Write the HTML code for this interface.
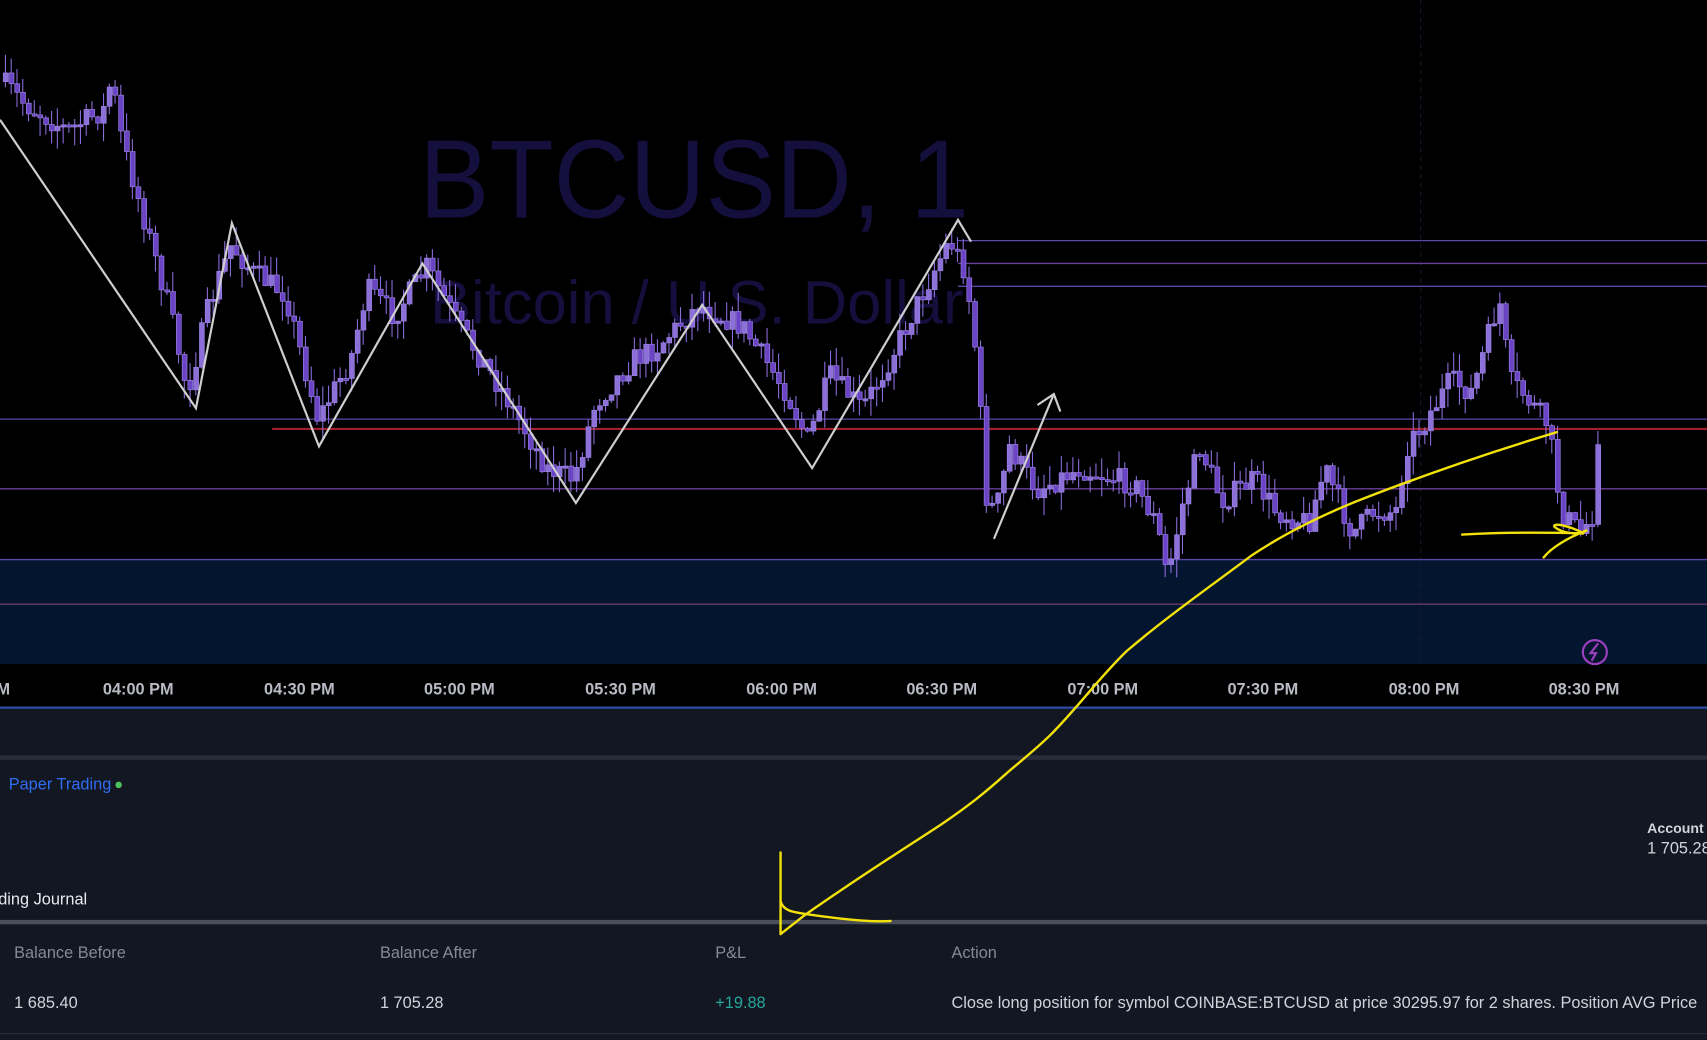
<!DOCTYPE html>
<html><head><meta charset="utf-8"><style>
html,body{margin:0;padding:0;background:#131722;overflow:hidden;width:1707px;height:1040px}
#w{position:absolute;left:0;top:0;width:1568px;height:955px;transform:scale(1.08865);transform-origin:0 0;background:#131722;font-family:"Liberation Sans","DejaVu Sans",sans-serif}
.t{position:absolute;white-space:nowrap}
</style></head><body><div id="w">
<svg id="s" width="1568" height="955" viewBox="0 0 1568 955" style="position:absolute;left:0;top:0">
<rect x="0" y="0" width="1568" height="650" fill="#000"/>
<rect x="0" y="514" width="1568" height="96" fill="#041530"/>
<text x="385" y="200" font-size="102" fill="#150f3d" textLength="505" lengthAdjust="spacingAndGlyphs">BTCUSD, 1</text>
<text x="395" y="297" font-size="56" fill="#150f3d" textLength="490" lengthAdjust="spacingAndGlyphs">Bitcoin / U.S. Dollar</text>
<line x1="1305" y1="0" x2="1305" y2="610" stroke="#161d30" stroke-dasharray="4 4"/>
<g stroke-width="1.2">
<line x1="880" y1="221" x2="1568" y2="221" stroke="#5b47a8"/>
<line x1="880" y1="242" x2="1568" y2="242" stroke="#6a3f9c"/>
<line x1="880" y1="263" x2="1568" y2="263" stroke="#5b47a8"/>
<line x1="0" y1="385" x2="1568" y2="385" stroke="#5b47a8"/>
<line x1="0" y1="449" x2="1568" y2="449" stroke="#6a3f9c"/>
<line x1="0" y1="514" x2="1568" y2="514" stroke="#5b47a8"/>
<line x1="0" y1="555" x2="1568" y2="555" stroke="#6a3a6a"/>
</g>
<line x1="250" y1="394" x2="1568" y2="394" stroke="#a02030" stroke-width="2"/>
<g id="c"></g>
<polyline points="0,110 180,375 213,205 293,410 388,242 529,462 645,280 746,430 880,202 892,222" fill="none" stroke="#cfcfcf" stroke-width="2"/>
<polyline points="913,495 968,362" fill="none" stroke="#cfcfcf" stroke-width="2"/>
<polyline points="953,372 968,362 974,378" fill="none" stroke="#cfcfcf" stroke-width="2"/>
<rect x="0" y="610" width="1568" height="40" fill="#000"/>
<g font-size="15" font-weight="bold" fill="#b8bbc4" text-anchor="middle">
<text x="3" y="638">M</text><text x="127" y="638">04:00 PM</text><text x="275" y="638">04:30 PM</text><text x="422" y="638">05:00 PM</text><text x="570" y="638">05:30 PM</text><text x="718" y="638">06:00 PM</text><text x="865" y="638">06:30 PM</text><text x="1013" y="638">07:00 PM</text><text x="1160" y="638">07:30 PM</text><text x="1308" y="638">08:00 PM</text><text x="1455" y="638">08:30 PM</text>
</g>
<circle cx="1465" cy="599" r="11" fill="none" stroke="#9c40c0" stroke-width="2"/>
<path d="M1468,591 L1461,600 L1466,600 L1462,607" fill="none" stroke="#9c40c0" stroke-width="2"/>
<rect x="0" y="649" width="1568" height="2" fill="#2f4ea8"/>
<rect x="0" y="694" width="1568" height="4" fill="#2a2e39"/>
<rect x="0" y="845" width="1568" height="4" fill="#4a4e58"/>
<rect x="0" y="949" width="1568" height="1" fill="#2a2e39"/>
<g fill="none" stroke="#f2e20a" stroke-width="2.2" stroke-linecap="round">
<path d="M717,858 L740,840 C790,805 830,780 865,757 C890,740 905,728 925,710 C945,693 955,685 965,675 C990,650 1010,622 1035,598 C1070,568 1110,540 1150,510 C1180,490 1220,470 1260,455 C1320,432 1380,412 1430,397"/>
<path d="M717,783 L717,858"/>
<path d="M717,828 C720,838 730,838 750,841 C780,845 800,847 818,846"/>
<path d="M1343,491 C1380,489 1420,489 1455,490 C1440,482 1425,480 1428,484 C1435,490 1450,492 1458,487 C1440,494 1425,503 1418,512"/>
</g>
</svg>
<div class="t" style="left:8px;top:712px;font-size:15px;color:#2f6cf0">Paper Trading <span style="display:inline-block;width:6px;height:6px;border-radius:3px;background:#4cc05a;vertical-align:middle"></span></div>
<div class="t" style="left:1513px;top:753px;font-size:13px;font-weight:bold;color:#d1d4dc">Account</div>
<div class="t" style="left:1513px;top:771px;font-size:15px;color:#d1d4dc">1 705.28</div>
<div class="t" style="left:-10px;top:818px;font-size:15px;color:#e6e8ee">ading Journal</div>
<div class="t" style="left:13px;top:867px;font-size:15px;color:#868993">Balance Before</div>
<div class="t" style="left:349px;top:867px;font-size:15px;color:#868993">Balance After</div>
<div class="t" style="left:657px;top:867px;font-size:15px;color:#868993">P&amp;L</div>
<div class="t" style="left:874px;top:867px;font-size:15px;color:#868993">Action</div>
<div class="t" style="left:13px;top:913px;font-size:15px;color:#d1d4dc">1 685.40</div>
<div class="t" style="left:349px;top:913px;font-size:15px;color:#d1d4dc">1 705.28</div>
<div class="t" style="left:657px;top:913px;font-size:15px;color:#26a69a">+19.88</div>
<div class="t" style="left:874px;top:913px;font-size:15px;color:#d1d4dc">Close long position for symbol COINBASE:BTCUSD at price 30295.97 for 2 shares. Position AVG Price</div>
</div>
<script>
(function(){
var pts=[[0,75],[20,95],[60,120],[95,100],[100,70],[110,130],[130,200],[155,290],[170,360],[190,280],[210,225],[230,250],[260,270],[290,385],[320,330],[335,265],[360,290],[390,245],[420,300],[460,360],[500,430],[525,440],[545,370],[580,330],[600,320],[640,280],[680,300],[720,360],[740,405],[760,345],[790,375],[810,340],[840,280],[870,220],[885,250],[895,330],[905,470],[915,460],[925,410],[950,450],[990,430],[1040,445],[1060,480],[1070,530],[1085,460],[1100,410],[1120,460],[1150,440],[1170,470],[1200,480],[1215,430],[1240,490],[1260,470],[1280,470],[1290,410],[1305,390],[1330,350],[1350,360],[1375,275],[1385,350],[1400,365],[1420,390],[1432,470],[1450,490],[1462,470],[1466,395]];
function py(x){for(var i=1;i<pts.length;i++){if(x<=pts[i][0]){var a=pts[i-1],b=pts[i];return a[1]+(b[1]-a[1])*(x-a[0])/(b[0]-a[0]);}}return 400;}
var seed=7;function rnd(){seed=(seed*16807)%2147483647;return seed/2147483647;}
var g=document.getElementById('c'),h='',prev=py(0);
for(var x=3;x<=1466;x+=5.3){var cl=py(x)+(rnd()-0.5)*22;var op=prev;var yt=Math.min(op,cl),yb=Math.max(op,cl);if(yb-yt<2)yb=yt+2;
var wt=yt-rnd()*18,wb=yb+rnd()*18;
h+='<line x1="'+(x+2)+'" y1="'+wt.toFixed(1)+'" x2="'+(x+2)+'" y2="'+wb.toFixed(1)+'" stroke="#8a6cd8" stroke-width="1"/>';
h+='<rect x="'+x.toFixed(1)+'" y="'+yt.toFixed(1)+'" width="4.5" height="'+(yb-yt).toFixed(1)+'" fill="'+(cl<op?'#8c70d8':'#6a44c4')+'" stroke="#9a80e6" stroke-width="0.6"/>';prev=cl;}
g.innerHTML=h;
})();
</script>
</body></html>
